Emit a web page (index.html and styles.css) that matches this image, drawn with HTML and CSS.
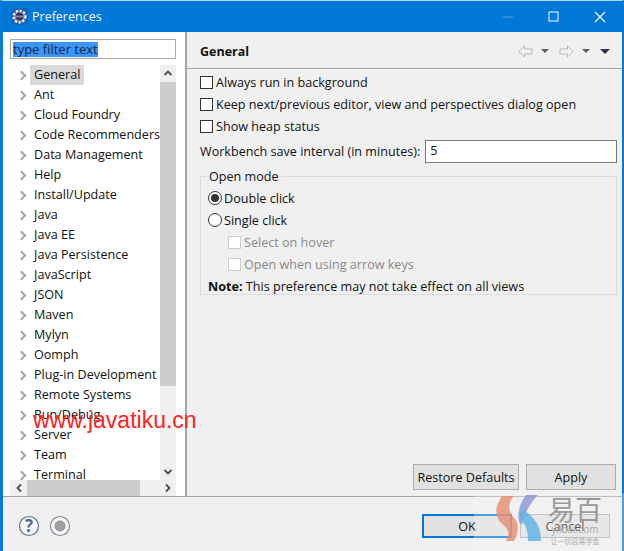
FILE: index.html
```html
<!DOCTYPE html>
<html lang="en">
<head>
<meta charset="utf-8">
<title>Preferences</title>
<link rel="stylesheet" href="styles.css">
</head>
<body>
<div class="window">
  <header class="titlebar">
    <svg class="app-icon" width="17" height="17" viewBox="0 0 20 20"><rect width="20" height="20" fill="#4a3f6b" opacity=".35"/><circle cx="10" cy="10" r="7" fill="none" stroke="#f2f2f2" stroke-width="2.6" stroke-dasharray="2.6 2"/><circle cx="10" cy="10" r="5.6" fill="#3b3560" stroke="#e8e8e8"/><rect x="5" y="9" width="10" height="2" fill="#8d87a8"/></svg>
    <span class="title">Preferences</span>
    <div class="winbtns">
      <svg width="12" height="12" viewBox="0 0 12 12"><path d="M1 6h10" stroke="#5fa3e0"/></svg>
      <svg width="12" height="12" viewBox="0 0 12 12"><rect x=".5" y=".5" width="9" height="9" transform="translate(.5 .5)" fill="none" stroke="#fff"/></svg>
      <svg width="12" height="12" viewBox="0 0 12 12"><path d="M1 1l10 10M11 1L1 11" stroke="#fff" stroke-width="1.1"/></svg>
    </div>
  </header>
  <div class="main">
    <aside class="side">
      <div class="filter"><span class="sel">type filter text</span></div>
      <div class="treebox">
        <div class="treerow-wrap">
          <ul class="tree">
            <li><i class="chev"></i><span class="lbl current">General</span></li>
            <li><i class="chev"></i><span class="lbl">Ant</span></li>
            <li><i class="chev"></i><span class="lbl">Cloud Foundry</span></li>
            <li><i class="chev"></i><span class="lbl">Code Recommenders</span></li>
            <li><i class="chev"></i><span class="lbl">Data Management</span></li>
            <li><i class="chev"></i><span class="lbl">Help</span></li>
            <li><i class="chev"></i><span class="lbl">Install/Update</span></li>
            <li><i class="chev"></i><span class="lbl">Java</span></li>
            <li><i class="chev"></i><span class="lbl">Java EE</span></li>
            <li><i class="chev"></i><span class="lbl">Java Persistence</span></li>
            <li><i class="chev"></i><span class="lbl">JavaScript</span></li>
            <li><i class="chev"></i><span class="lbl">JSON</span></li>
            <li><i class="chev"></i><span class="lbl">Maven</span></li>
            <li><i class="chev"></i><span class="lbl">Mylyn</span></li>
            <li><i class="chev"></i><span class="lbl">Oomph</span></li>
            <li><i class="chev"></i><span class="lbl">Plug-in Development</span></li>
            <li><i class="chev"></i><span class="lbl">Remote Systems</span></li>
            <li><i class="chev"></i><span class="lbl">Run/Debug</span></li>
            <li><i class="chev"></i><span class="lbl">Server</span></li>
            <li><i class="chev"></i><span class="lbl">Team</span></li>
            <li><i class="chev"></i><span class="lbl">Terminal</span></li>
          </ul>
          <div class="vscroll">
            <svg width="16" height="17" viewBox="0 0 16 17"><path d="M4.5 10L8 6.5 11.500 10" fill="none" stroke="#505050" stroke-width="1.800"/></svg>
            <div class="vthumb"></div>
            <svg width="16" height="17" viewBox="0 0 16 17"><path d="M4.500 7L8 10.500 11.500 7" fill="none" stroke="#505050" stroke-width="1.800"/></svg>
          </div>
        </div>
        <div class="hscroll">
          <svg width="17" height="16" viewBox="0 0 17 16"><path d="M11 4.500L7.500 8l3.500 3.500" fill="none" stroke="#505050" stroke-width="1.800"/></svg>
          <div class="htrack"><div class="hthumb"></div></div>
          <svg width="17" height="16" viewBox="0 0 17 16"><path d="M7 4.500L10.500 8 7 11.500" fill="none" stroke="#505050" stroke-width="1.800"/></svg>
        </div>
      </div>
    </aside>
    <section class="content">
      <div class="head">
        <h1>General</h1>
        <div class="nav">
          <svg width="15" height="13" viewBox="0 0 15 13"><path d="M.8 6.500L6.500 1v3h7.500v5H6.500v3z" fill="#f4f4f4" stroke="#b5b5b5"/></svg>
          <i class="drop"></i>
          <svg class="next" width="15" height="13" viewBox="0 0 15 13"><path d="M14.200 6.500L8.500 1v3H1v5h7.500v3z" fill="#f4f4f4" stroke="#b5b5b5"/></svg>
          <i class="drop"></i>
          <i class="drop menu"></i>
        </div>
      </div>
      <div class="form">
        <label class="opt"><i class="cb"></i>Always run in background</label>
        <label class="opt"><i class="cb"></i>Keep next/previous editor, view and perspectives dialog open</label>
        <label class="opt"><i class="cb"></i>Show heap status</label>
        <div class="interval"><span>Workbench save interval (in minutes):</span><div class="input">5</div></div>
        <fieldset class="group">
          <legend>Open mode</legend>
          <label class="opt"><i class="rb on"></i>Double click</label>
          <label class="opt"><i class="rb"></i>Single click</label>
          <label class="opt sub"><i class="cb off"></i>Select on hover</label>
          <label class="opt sub"><i class="cb off"></i>Open when using arrow keys</label>
          <p class="note"><b>Note:</b> This preference may not take effect on all views</p>
        </fieldset>
      </div>
      <div class="actions">
        <div class="btn restore">Restore Defaults</div>
        <div class="btn apply">Apply</div>
      </div>
    </section>
  </div>
  <footer class="footer">
    <div class="help">
      <svg width="22" height="22" viewBox="0 0 22 22"><circle cx="11" cy="11" r="9.500" fill="#f7f7f9" stroke="#5f7596" stroke-width="1.200"/><text x="11" y="16.500" text-anchor="middle" class="qmark">?</text></svg>
      <svg width="22" height="22" viewBox="0 0 22 22"><circle cx="11" cy="11" r="9.500" fill="#f7f7f7" stroke="#7f8a99" stroke-width="1.200"/><circle cx="11" cy="11" r="5" fill="#a0a0a0" stroke="#8a8a8a"/></svg>
    </div>
    <div class="dlg">
      <div class="btn ok">OK</div>
      <div class="btn cancel">Cancel</div>
    </div>
  </footer>
  <div class="wm-url">www.javatiku.cn</div>
  <div class="wm-logo">
    <svg class="wm-mark" width="50" height="50" viewBox="0 0 50 50"><path d="M7 2C0 12-1 22 6 29c6 5 10 9 5 18h8c5-9 5-17 1-22C13 18 12 10 19 2z" fill="#e58f6f" opacity=".8"/><path d="M31 1h12c-7 7-13 17-16 30l-3-3c-2-10 1-19 7-27z" fill="#8f9ad8" opacity=".85"/><path d="M27 14c9 8 19 14 19 33H33c0-11-3-19-9-23z" fill="#62b4e6" opacity=".85"/></svg>
    <div class="wm-text"><span class="wm-cn">易百</span><span class="wm-com">yiibai.com</span><span class="wm-sub">让一切容易学会</span></div>
  </div>
</div>
</body>
</html>
```
FILE: styles.css
```css
* { box-sizing: border-box; }
html, body { margin: 0; padding: 0; }
body { width: 624px; height: 551px; overflow: hidden; font-family: "Open Sans", "Noto Sans", sans-serif; font-size: 12.600px; color: #111; }
.window { position: relative; width: 624px; height: 551px; display: flex; flex-direction: column; background: #f0f0f0; border-left: 3px solid #0a78d7; border-right: 2px solid #0a78d7; border-top: 1px solid #b8d4ec; }
.titlebar { height: 31px; flex: none; background: #0078d7; display: flex; align-items: center; padding: 0 0 0 9px; color: #fff; margin-left: -1px; margin-right: -1px; }
.app-icon { flex: none; }
.title { margin-left: 4px; font-size: 12.500px; color: #f4f9fd; }
.winbtns { margin-left: auto; display: flex; align-items: center; gap: 34px; padding-right: 17px; }
.main { flex: 1; display: flex; min-height: 0; border-bottom: 1px solid #a6a6a6; }
.side { width: 184px; flex: none; background: #fff; border-right: 2px solid #a6a6a6; padding: 7px 9px 0 7px; display: flex; flex-direction: column; }
.filter { height: 20px; border: 1px solid #a9a9a9; padding: 2px 0 0 2px; line-height: 14px; flex: none; }
.sel { background: #3a96f5; color: #10284a; display: inline-block; height: 15px; font-size: 13px; }
.treebox { margin-top: 6px; flex: 1; min-height: 0; display: flex; flex-direction: column; }
.treerow-wrap { flex: 1; display: flex; min-height: 0; }
.tree { list-style: none; margin: 0; padding: 0; flex: 1; overflow: hidden; min-width: 0; }
.tree li { height: 20px; display: flex; align-items: center; padding-left: 8px; white-space: nowrap; overflow: hidden; }
.chev { width: 7px; height: 7px; border-top: 2px solid #a8a8a8; border-right: 2px solid #a8a8a8; transform: rotate(45deg); flex: none; margin-right: 5px; }
.lbl { padding: 0 4px; line-height: 20px; height: 20px; color: #111; }
.lbl.current { background: #d9d9d9; }
.vscroll { width: 16px; flex: none; background: #f0f0f0; display: flex; flex-direction: column; }
.vthumb { flex: 1; background: #cdcdcd; margin-bottom: 77px; }
.vscroll svg, .hscroll svg { flex: none; display: block; }
.hscroll { height: 16px; flex: none; background: #f0f0f0; display: flex; }
.htrack { flex: 1; }
.hthumb { width: 113px; height: 16px; background: #cdcdcd; }
.content { flex: 1; min-width: 0; display: flex; flex-direction: column; padding: 0 5px 0 13px; position: relative; }
.head { height: 37px; display: flex; align-items: center; justify-content: space-between; margin: 0 -5px 0 -13px; padding: 2px 12px 0 13px; border-bottom: 1px solid #a6a6a6; flex: none; }
.head h1 { font-size: 12.500px; font-weight: 700; margin: 0; color: #111; }
.nav { display: flex; align-items: center; gap: 8px; }
.nav .next { margin-left: 2px; }
.drop { width: 0; height: 0; border-left: 4px solid transparent; border-right: 4px solid transparent; border-top: 4px solid #606060; }
.drop.menu { border-left-width: 5px; border-right-width: 5px; border-top: 5px solid #3a2a52; margin-left: 2px; }
.form { padding-top: 2px; flex: 1; min-height: 0; }
.opt { display: flex; align-items: center; height: 22px; white-space: nowrap; }
.cb { width: 13px; height: 13px; border: 1px solid #333; background: #fff; flex: none; margin-right: 3px; }
.cb.off { border-color: #ccc; }
.rb { width: 14px; height: 14px; border-radius: 50%; border: 1px solid #333; background: #fff; flex: none; margin-right: 2px; position: relative; }
.rb.on::after { content: ""; position: absolute; left: 2px; top: 2px; width: 8px; height: 8px; border-radius: 50%; background: #333; }
.interval { display: flex; align-items: center; height: 24px; margin-top: 2px; gap: 5px; }
.input { flex: 1; height: 23px; border: 1px solid #7a7a7a; background: #fff; padding-left: 4px; line-height: 20px; }
.group { margin: 5px 0 0; padding: 0 0 0 7px; border: 1px solid #dcdcdc; height: 127px; min-width: 0; }
.group legend { padding: 0 2px; margin-left: -1px; line-height: 17px; }
.group .opt:first-of-type { margin-top: 2px; }
.sub { padding-left: 20px; color: #8a8a8a; }
.note { margin: 1px 0 0; height: 22px; line-height: 22px; white-space: nowrap; }
.actions { display: flex; justify-content: flex-end; gap: 7px; padding: 0 1px 6px 0; flex: none; }
.btn { background: #e1e1e1; border: 1px solid #adadad; height: 26px; display: flex; align-items: center; justify-content: center; }
.restore { width: 106px; }
.apply { width: 90px; }
.footer { height: 54px; flex: none; display: flex; align-items: center; justify-content: space-between; padding: 4px 12px 0 15px; }
.help { display: flex; gap: 9px; }
.qmark { font: 700 17px "Open Sans", sans-serif; fill: #4f6a91; }
.dlg { display: flex; gap: 8px; }
.ok { width: 90px; height: 24px; border: 2px solid #0078d7; }
.cancel { width: 90px; height: 24px; }
.wm-url { position: absolute; left: 30px; top: 406px; font: 23px/26px "Liberation Sans", sans-serif; color: #f22; white-space: nowrap; }
.wm-logo { position: absolute; left: 471px; top: 492px; display: flex; background: rgba(244,244,244,.3); padding: 1px 0 0 21px; width: 150px; height: 58px; }
.wm-mark { flex: none; overflow: visible; }
.wm-text { display: flex; flex-direction: column; margin-left: 2px; color: #999; align-items: center; width: 56px; }
.wm-cn { font: 27px/29px "Noto Sans CJK SC", sans-serif; color: #9a9a9a; }
.wm-com { font-size: 10px; line-height: 13px; color: #aaa; white-space: nowrap; }
.wm-sub { font: 7px/10px "Noto Sans CJK SC", sans-serif; color: #aaa; white-space: nowrap; }
```
